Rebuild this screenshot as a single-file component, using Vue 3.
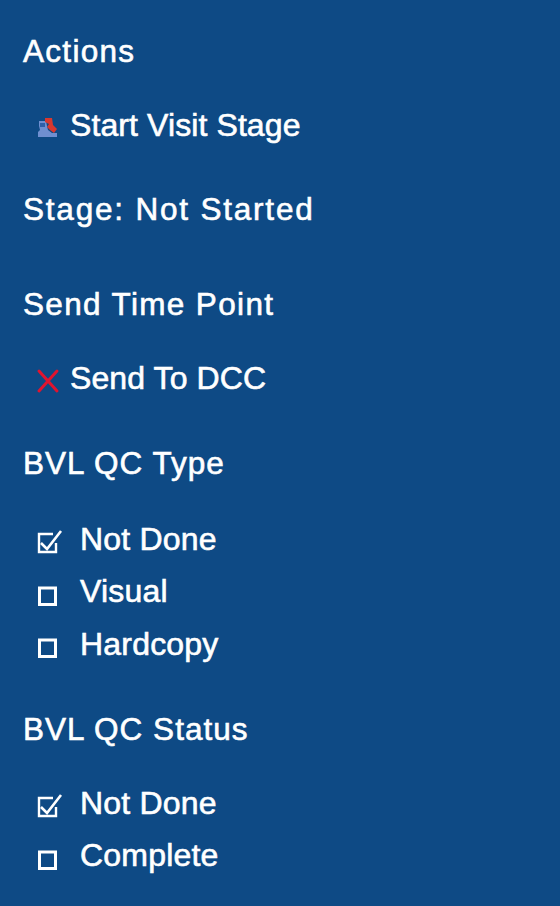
<script setup>
const typeOptions = [
  { label: 'Not Done', checked: true },
  { label: 'Visual', checked: false },
  { label: 'Hardcopy', checked: false },
]
const statusOptions = [
  { label: 'Not Done', checked: true },
  { label: 'Complete', checked: false },
]
</script>

<template>
  <div class="panel">
    <h3 class="title first">Actions</h3>
    <div class="action a1">
      <svg class="ico" width="24" height="24" viewBox="0 0 24 24">
        <path d="M3 5h7l1 5 1 4 4 3h5v4H2v-5l2-2-1-4z" fill="#6f8fd0"/>
        <path d="M9 2h7l1 7 4 4-3 4-4-3-3-3 2-3-4-2z" fill="#d8382f"/>
        <path d="M4 7h5v4H4z" fill="#2f5fa8"/>
      </svg>
      <span>Start Visit Stage</span>
    </div>
    <h3 class="title t2">Stage: Not Started</h3>
    <h3 class="title t3">Send Time Point</h3>
    <div class="action a2">
      <svg class="ico" width="24" height="24" viewBox="0 0 24 24">
        <path d="M3 2l18 20M21 2L3 22" fill="none" stroke="#e0142f" stroke-width="3" stroke-linecap="round"/>
      </svg>
      <span>Send To DCC</span>
    </div>
    <h3 class="title t4">BVL QC Type</h3>
    <ul class="opts o1">
      <li v-for="o in typeOptions" :key="o.label">
        <svg class="ico" width="24" height="24" viewBox="0 0 24 24">
          <template v-if="o.checked">
            <path d="M17 4H3v18h17v-9" fill="none" stroke="#fff" stroke-width="2.4"/>
            <path d="M5 13l6 6L25 1" fill="none" stroke="#fff" stroke-width="2.6"/>
          </template>
          <rect v-else x="3.5" y="5" width="16" height="16.5" fill="none" stroke="#fff" stroke-width="3"/>
        </svg>
        <span>{{ o.label }}</span>
      </li>
    </ul>
    <h3 class="title t5">BVL QC Status</h3>
    <ul class="opts o2">
      <li v-for="o in statusOptions" :key="o.label">
        <svg class="ico" width="24" height="24" viewBox="0 0 24 24">
          <template v-if="o.checked">
            <path d="M17 4H3v18h17v-9" fill="none" stroke="#fff" stroke-width="2.4"/>
            <path d="M5 13l6 6L25 1" fill="none" stroke="#fff" stroke-width="2.6"/>
          </template>
          <rect v-else x="3.5" y="5" width="16" height="16.5" fill="none" stroke="#fff" stroke-width="3"/>
        </svg>
        <span>{{ o.label }}</span>
      </li>
    </ul>
  </div>
</template>

<style>
html, body { margin: 0; background: #0e4a85; }
</style>

<style scoped>
.panel {
  box-sizing: border-box;
  width: 560px;
  height: 906px;
  overflow: hidden;
  background: #0e4a85;
  color: #fff;
  font-family: "Liberation Sans", Arial, sans-serif;
  padding: 33px 0 0 23px;
}
.title {
  margin: 0;
  font-size: 31.5px;
  font-weight: 400;
  line-height: 36px;
  letter-spacing: 1px;
  -webkit-text-stroke: 0.6px #fff;
}
.first { letter-spacing: 1.3px; }
.action {
  display: flex;
  align-items: center;
  gap: 10px;
  padding-left: 13px;
  font-size: 32px;
  line-height: 36px;
  letter-spacing: 0.1px;
  -webkit-text-stroke: 0.6px #fff;
}
.ico { flex: none; margin-top: 6px; overflow: visible; }
.a1 { margin-top: 38px; }
.t2 { margin-top: 48px; letter-spacing: 1.8px; }
.t3 { margin-top: 59px; letter-spacing: 1.35px; }
.a2 { margin-top: 38px; }
.t4 { margin-top: 49px; }
.opts { list-style: none; margin: 0; padding: 0 0 0 13px; }
.opts li {
  display: flex;
  align-items: center;
  gap: 20px;
  height: 52.5px;
  font-size: 32px;
  letter-spacing: 0.2px;
  -webkit-text-stroke: 0.6px #fff;
}
.o1 { margin-top: 32px; }
.t5 { margin-top: 40.5px; }
.o2 { margin-top: 30px; }
</style>
